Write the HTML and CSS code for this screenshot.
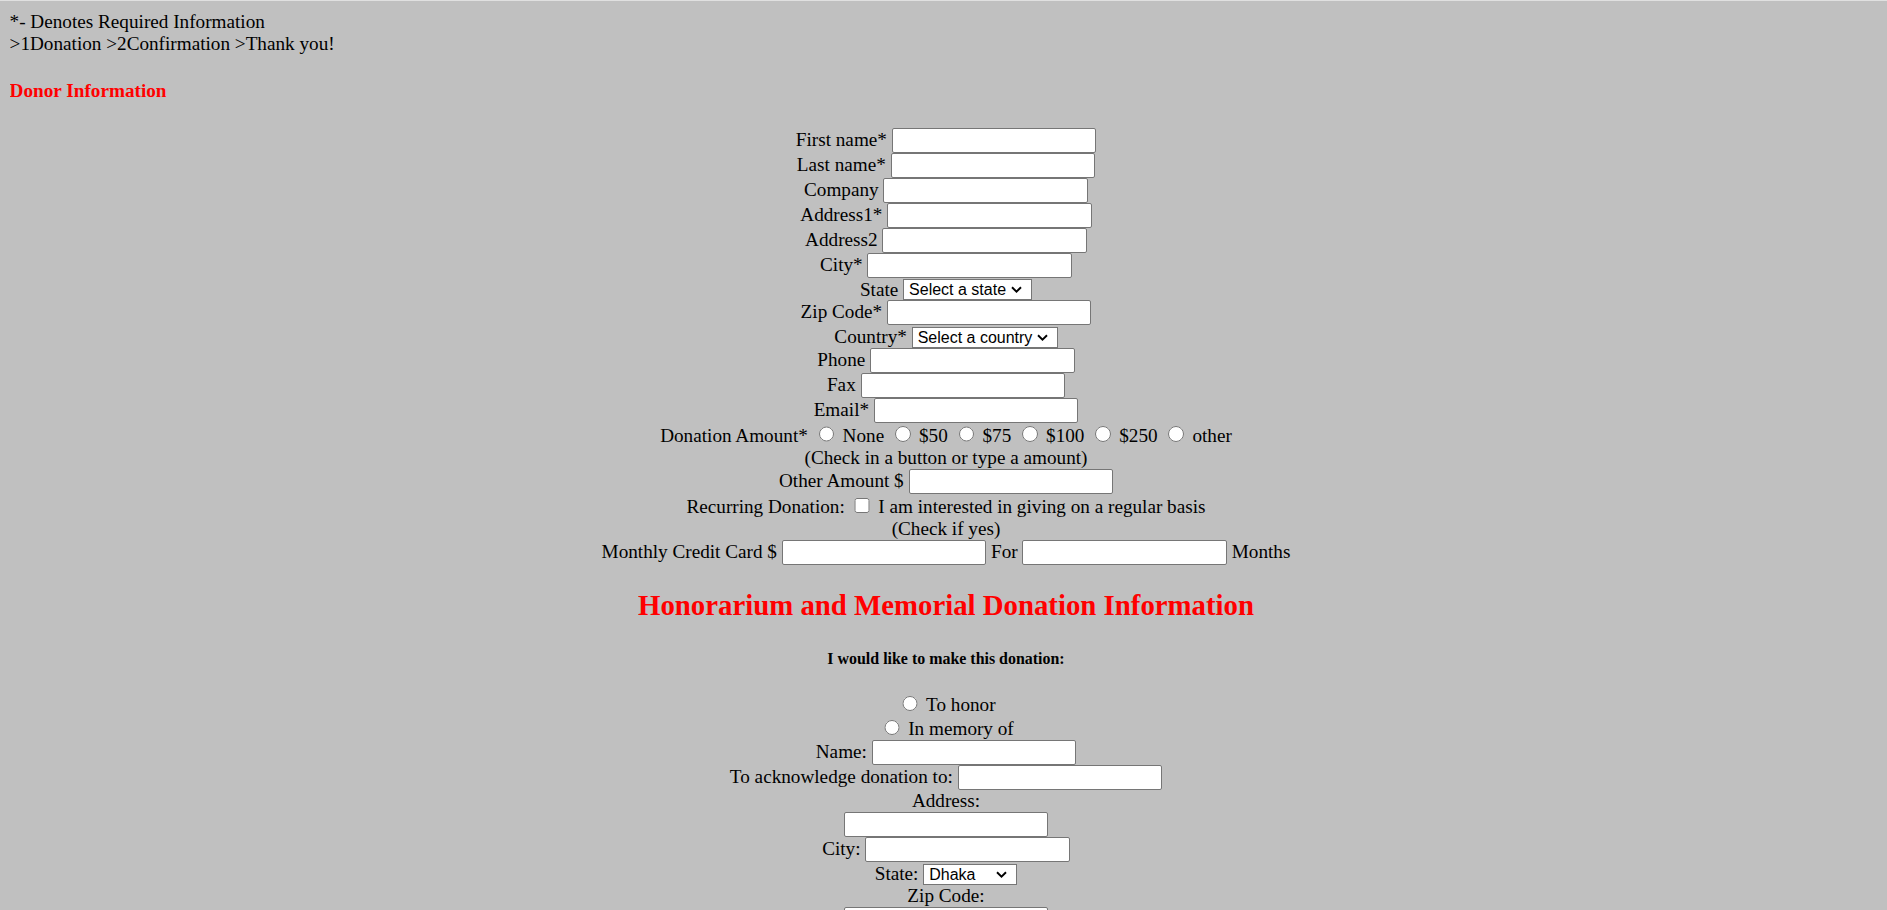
FILE: index.html
```html
<!DOCTYPE html>
<html lang="en">
<head>
<meta charset="utf-8">
<title>Donation</title>
<link rel="stylesheet" href="styles.css">
</head>
<body>
<div class="intro">*- Denotes Required Information<br>&gt;1Donation &gt;2Confirmation &gt;Thank you!</div>
<h4 class="section-title">Donor Information</h4>
<form class="donation-form">
  <div class="row">First name* <input class="field" type="text"></div>
  <div class="row">Last name* <input class="field" type="text"></div>
  <div class="row">Company <input class="field" type="text"></div>
  <div class="row">Address1* <input class="field" type="text"></div>
  <div class="row">Address2 <input class="field" type="text"></div>
  <div class="row">City* <input class="field" type="text"></div>
  <div class="row">State <select class="dropdown dropdown-state"><option>Select a state</option><option>Alabama</option><option>Alaska</option><option>Arizona</option></select></div>
  <div class="row">Zip Code* <input class="field" type="text"></div>
  <div class="row">Country* <select class="dropdown dropdown-country"><option>Select a country</option><option>Bangladesh</option><option>United States</option></select></div>
  <div class="row">Phone <input class="field" type="text"></div>
  <div class="row">Fax <input class="field" type="text"></div>
  <div class="row">Email* <input class="field" type="text"></div>
  <div class="row">Donation Amount* <input class="choice" type="radio" name="amount"> None <input class="choice" type="radio" name="amount"> $50 <input class="choice" type="radio" name="amount"> $75 <input class="choice" type="radio" name="amount"> $100 <input class="choice" type="radio" name="amount"> $250 <input class="choice" type="radio" name="amount"> other</div>
  <div class="row">(Check in a button or type a amount)</div>
  <div class="row">Other Amount $ <input class="field" type="text"></div>
  <div class="row">Recurring Donation: <input class="tick" type="checkbox"> I am interested in giving on a regular basis</div>
  <div class="row">(Check if yes)</div>
  <div class="row">Monthly Credit Card $ <input class="field" type="text"> For <input class="field" type="text"> Months</div>

  <h2 class="honor-title">Honorarium and Memorial Donation Information</h2>
  <h5 class="honor-sub">I would like to make this donation:</h5>

  <div class="row"><input class="choice" type="radio" name="kind"> To honor</div>
  <div class="row"><input class="choice" type="radio" name="kind"> In memory of</div>
  <div class="row">Name: <input class="field" type="text"></div>
  <div class="row">To acknowledge donation to: <input class="field" type="text"></div>
  <div class="row">Address:</div>
  <div class="row"><input class="field" type="text"></div>
  <div class="row">City: <input class="field" type="text"></div>
  <div class="row">State: <select class="dropdown dropdown-division"><option>Dhaka</option><option>Chittagong</option><option>Khulna</option><option>Rajshahi</option><option>Sylhet</option></select></div>
  <div class="row">Zip Code:</div>
  <div class="row"><input class="field" type="text"></div>
  <div class="row">Phone: <input class="field" type="text"></div>
  <div class="row">Message:</div>
  <div class="row"><input class="field" type="text"></div>
</form>
</body>
</html>
```

FILE: styles.css
```css
html {
  background: #c0c0c0;
  border-top: 1px solid #e0e0e0;
  scrollbar-width: none;
}

body {
  margin: 9.6px 4.6px 9.6px 9.6px;
  background: #c0c0c0;
  color: #000;
  font-family: "Liberation Serif", "Times New Roman", serif;
  font-size: 19.2px;
  line-height: normal;
}

.intro {
  margin: 0;
}

.section-title {
  margin: 25.5px 0 25.5px;
  font-size: 19.2px;
  font-weight: bold;
  color: #ff0000;
}

.donation-form {
  margin: 0;
  text-align: center;
}

.row {
  margin: 0;
}

.field {
  box-sizing: border-box;
  width: 204.5px;
  height: 25px;
  margin: 0;
  padding: 1px 2px;
  border: 1px solid #767676;
  border-radius: 2px;
  background: #fff;
  font-family: "Liberation Sans", Arial, sans-serif;
  font-size: 16px;
  vertical-align: baseline;
}

.dropdown {
  box-sizing: border-box;
  -webkit-appearance: none;
  appearance: none;
  height: 21px;
  margin: 1.6px 0 0;
  padding: 0 0 0 5px;
  border: 1px solid #767676;
  border-radius: 0;
  background-color: #fff;
  background-image: url("data:image/svg+xml,%3Csvg xmlns='http://www.w3.org/2000/svg' width='11' height='7' viewBox='0 0 11 7'%3E%3Cpath d='M1 1.2 L5.5 5.6 L10 1.2' fill='none' stroke='%23000' stroke-width='1.9'/%3E%3C/svg%3E");
  background-repeat: no-repeat;
  background-position: right 9px center;
  color: #000;
  font-family: "Liberation Sans", Arial, sans-serif;
  font-size: 16px;
  line-height: normal;
  vertical-align: baseline;
}

.dropdown-state {
  width: 129px;
}

.dropdown-country {
  width: 146px;
}

.dropdown-division {
  width: 94px;
}

.choice {
  width: 15.6px;
  height: 15.6px;
  margin: 3.6px 3.6px 0 6px;
  vertical-align: baseline;
}

.tick {
  width: 15.6px;
  height: 15.6px;
  margin: 3.6px 3.6px 3.6px 4.8px;
  vertical-align: baseline;
}

.honor-title {
  margin: 23.9px 0;
  font-size: 28.8px;
  font-weight: bold;
  color: #ff0000;
}

.honor-sub {
  margin: 27.8px 0 24.2px;
  font-size: 15.94px;
  font-weight: bold;
}
```
